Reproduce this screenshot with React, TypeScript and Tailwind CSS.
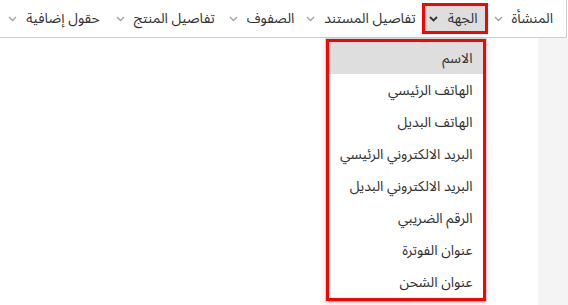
import React from "react";

const tabs = ["المنشأة", "الجهة", "تفاصيل المستند", "الصفوف", "تفاصيل المنتج", "حقول إضافية"];

const fields = [
  "الاسم",
  "الهاتف الرئيسي",
  "الهاتف البديل",
  "البريد الالكتروني الرئيسي",
  "البريد الالكتروني البديل",
  "الرقم الضريبي",
  "عنوان الفوترة",
  "عنوان الشحن",
];

function Chevron({ dark }: { dark?: boolean }) {
  return (
    <svg width="9" height="6" viewBox="0 0 9 6" className="shrink-0">
      <polyline
        points="1,1 4.5,4.5 8,1"
        fill="none"
        stroke={dark ? "#333" : "#a0a0a0"}
        strokeWidth={dark ? 1.8 : 1.3}
      />
    </svg>
  );
}

export default function App() {
  return (
    <div
      dir="rtl"
      className="w-[568px] h-[305px] bg-white overflow-hidden font-['Noto_Sans_Arabic','DejaVu_Sans',sans-serif] text-[#333] whitespace-nowrap"
    >
      {/* شريط التبويبات */}
      <div className="flex h-[38px] mr-[1px] border-r border-b border-[#cfcfcf] items-center pr-[7px]">
        {tabs.map((t, idx) =>
          t === "الجهة" ? (
            <div key={t} className="relative">
              <div className="flex items-center gap-[10px] h-[31px] pr-[7px] pl-[4px] bg-[#dedede] border-[3px] border-[#ff0000] text-[14px]">
                <span>{t}</span>
                <Chevron dark />
              </div>
              <div className="absolute top-[35px] right-[1px] w-[162px] bg-white border border-[#d6d6d6] shadow-[0_2px_6px_rgba(0,0,0,0.12)]">
                <div className="border-[3px] border-[#ff0000]">
                  {fields.map((f, i) => (
                    <div
                      key={f}
                      className={
                        "h-[32px] flex items-center px-[10px] text-[14px] " +
                        (i === 0 ? "bg-[#dedede]" : "")
                      }
                    >
                      {f}
                    </div>
                  ))}
                </div>
              </div>
            </div>
          ) : (
            <div
              key={t}
              className={
                "flex items-center gap-[9px] text-[14px] " + (idx > 3 ? "px-[8px]" : "px-[6px]")
              }
            >
              <span>{t}</span>
              <Chevron />
            </div>
          )
        )}
      </div>
      <div className="flex h-[267px]">
        <div className="w-[30px] bg-[#f4f4f4]" />
        <div className="flex-1 bg-white" />
      </div>
    </div>
  );
}
